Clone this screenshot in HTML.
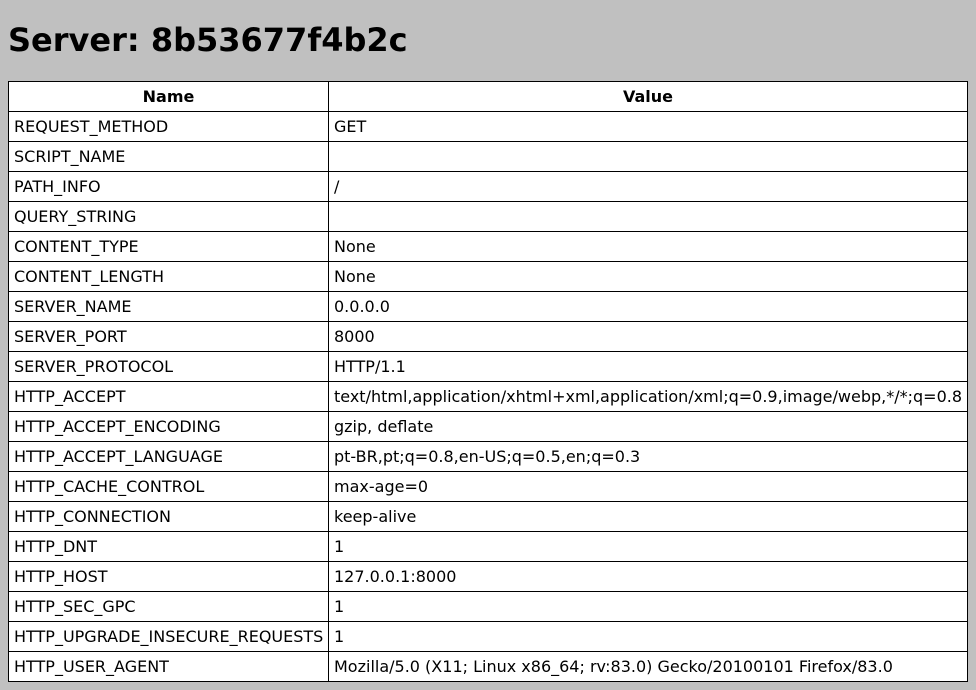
<!DOCTYPE html>
<html><head><meta charset="utf-8"><style>
body{margin:8px;background:#c0c0c0;font-family:"DejaVu Sans",sans-serif;}
h1{font-size:32px;margin:22px 0 22px;line-height:37px;font-weight:bold;}
table{border-collapse:collapse;background:#fff;width:960px;table-layout:fixed;font-size:16px;}
td,th{border:1px solid #000;height:29px;padding:0 5px;line-height:19px;text-align:left;white-space:nowrap;overflow:visible;}
th{text-align:center;font-weight:bold;}
col.a{width:320px}
</style></head><body>
<h1>Server: 8b53677f4b2c</h1>
<table><col class="a"><col>
<tr><th>Name</th><th>Value</th></tr>
<tr><td>REQUEST_METHOD</td><td>GET</td></tr>
<tr><td>SCRIPT_NAME</td><td></td></tr>
<tr><td>PATH_INFO</td><td>/</td></tr>
<tr><td>QUERY_STRING</td><td></td></tr>
<tr><td>CONTENT_TYPE</td><td>None</td></tr>
<tr><td>CONTENT_LENGTH</td><td>None</td></tr>
<tr><td>SERVER_NAME</td><td>0.0.0.0</td></tr>
<tr><td>SERVER_PORT</td><td>8000</td></tr>
<tr><td>SERVER_PROTOCOL</td><td>HTTP/1.1</td></tr>
<tr><td>HTTP_ACCEPT</td><td>text/html,application/xhtml+xml,application/xml;q=0.9,image/webp,*/*;q=0.8</td></tr>
<tr><td>HTTP_ACCEPT_ENCODING</td><td>gzip, deflate</td></tr>
<tr><td>HTTP_ACCEPT_LANGUAGE</td><td>pt-BR,pt;q=0.8,en-US;q=0.5,en;q=0.3</td></tr>
<tr><td>HTTP_CACHE_CONTROL</td><td>max-age=0</td></tr>
<tr><td>HTTP_CONNECTION</td><td>keep-alive</td></tr>
<tr><td>HTTP_DNT</td><td>1</td></tr>
<tr><td>HTTP_HOST</td><td>127.0.0.1:8000</td></tr>
<tr><td>HTTP_SEC_GPC</td><td>1</td></tr>
<tr><td>HTTP_UPGRADE_INSECURE_REQUESTS</td><td>1</td></tr>
<tr><td>HTTP_USER_AGENT</td><td>Mozilla/5.0 (X11; Linux x86_64; rv:83.0) Gecko/20100101 Firefox/83.0</td></tr>
</table>
</body></html>
